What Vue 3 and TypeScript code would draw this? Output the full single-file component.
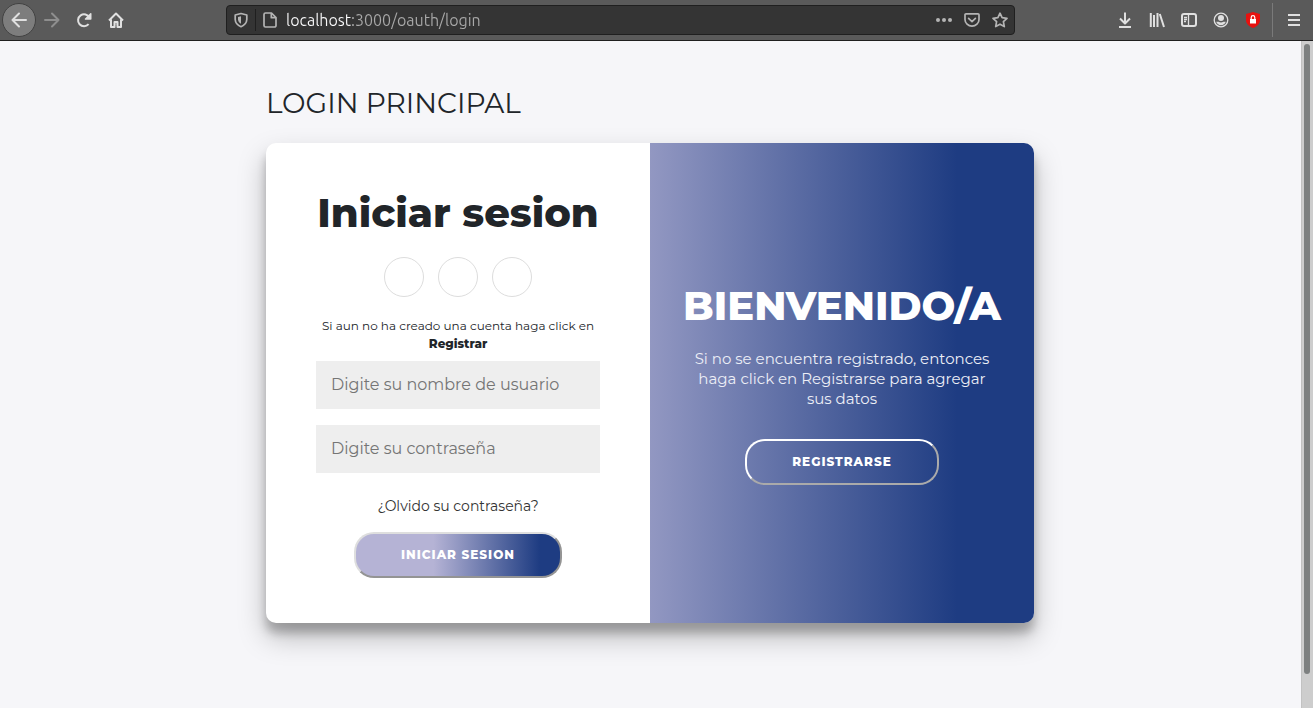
<script setup lang="ts">
import { ref } from 'vue'

const address = ref('localhost:3000/oauth/login')
const user = ref('')
const password = ref('')
const socials: string[] = ['Facebook', 'Google', 'LinkedIn']
</script>

<template>
  <div class="window">
    <header class="toolbar">
      <nav class="group" aria-label="Navegación">
        <button type="button" class="tool back" aria-label="Atrás">
          <svg viewBox="0 0 16 16"><path d="M15 8H1.5M8 1.5L1.5 8L8 14.5" /></svg>
        </button>
        <button type="button" class="tool forward" aria-label="Adelante" disabled>
          <svg viewBox="0 0 16 16"><path d="M1 8h13.500M8 1.500L14.500 8L8 14.500" /></svg>
        </button>
        <button type="button" class="tool" aria-label="Recargar">
          <svg viewBox="0 0 16 16"><path d="M12.600 12.200A6 6 0 1 1 13.400 5.500" /><path class="solid" d="M14.500 1a.8.8 0 0 1 1 .8V7a.8.8 0 0 1-.8.8H9.500a.8.8 0 0 1-.5-1.400l5-5z" /></svg>
        </button>
        <button type="button" class="tool" aria-label="Inicio">
          <svg viewBox="0 0 16 16"><path d="M1 8.500L8 1.500L15 8.500M3 7.500V15H6.500V10H9.500V15H13V7.500" /><path class="solid" d="M7.500 11.500h1v1h-1z" /></svg>
        </button>
      </nav>

      <div class="address">
        <svg class="mini" viewBox="0 0 16 16"><path d="M8 1.500L13.800 3V7.500C13.600 11 11 13.500 8 14.700C5 13.500 2.400 11 2.200 7.500V3Z" /><path class="solid" d="M8 4.200L5 5v2.500C5.100 9.300 6.300 10.800 8 11.800Z" /></svg>
        <span class="split"></span>
        <svg class="mini page-icon" viewBox="0 0 16 16"><path d="M3.500 1H9.500L14 5.500V13.500A1.500 1.500 0 0 1 12.500 15H3.500A1.500 1.500 0 0 1 2 13.500V2.500A1.500 1.500 0 0 1 3.500 1ZM9.300 1.500V5.700H13.700" /></svg>
        <input v-model="address" class="url" type="text" aria-label="Dirección" spellcheck="false" />
        <button type="button" class="mini-button" aria-label="Acciones de página">
          <svg viewBox="0 0 16 16"><circle class="solid" cx="2" cy="8" r="2" /><circle class="solid" cx="8" cy="8" r="2" /><circle class="solid" cx="14" cy="8" r="2" /></svg>
        </button>
        <button type="button" class="mini-button" aria-label="Guardar en Pocket">
          <svg viewBox="0 0 16 16"><path d="M2 1.800H14A1 1 0 0 1 15 2.800V7.500A7 6.700 0 0 1 1 7.500V2.800A1 1 0 0 1 2 1.800Z" /><path d="M4.600 6.300L8 9.600L11.400 6.300" stroke-linecap="round" /></svg>
        </button>
        <button type="button" class="mini-button" aria-label="Marcar página">
          <svg viewBox="0 0 16 16"><path d="M8 1.200L10.100 5.700L15 6.300L11.400 9.700L12.300 14.600L8 12.200L3.700 14.600L4.600 9.700L1 6.300L5.900 5.700Z" /></svg>
        </button>
      </div>

      <div class="group">
        <button type="button" class="tool" aria-label="Descargas">
          <svg viewBox="0 0 16 16"><path d="M8 0.500V11M3 6.500L8 11.500L13 6.500M2 15H14" /></svg>
        </button>
        <button type="button" class="tool" aria-label="Biblioteca">
          <svg viewBox="0 0 16 16"><path d="M1.800 1V15M5 3V15M8.500 1V15M10.800 2L15 15" /></svg>
        </button>
        <button type="button" class="tool" aria-label="Barra lateral">
          <svg viewBox="0 0 16 16"><rect x="1" y="2" width="14" height="12" rx="2" /><path class="thin" d="M7.500 2V14M3 5.500H6M3 7.500H6M3 9.500H5" /></svg>
        </button>
        <button type="button" class="tool" aria-label="Cuenta">
          <svg viewBox="0 0 16 16"><circle class="thin" cx="8" cy="8" r="6.800" /><circle class="solid" cx="8" cy="6" r="3" /><path class="solid" d="M3.200 9.700H5.600C7 10.700 9 10.700 10.400 9.700H12.800C12 12 10.200 13.200 8 13.200S4 12 3.200 9.700Z" /></svg>
        </button>
        <button type="button" class="tool" aria-label="Bloqueador">
          <svg viewBox="0 0 16 16"><path class="red" d="M8 0L15 2V8C15 12 11.500 14.800 8 16C4.500 14.800 1 12 1 8V2Z" /><path class="white" d="M5 7h6v4.500H5z" /><path class="arch" d="M6.200 7V5.500a1.800 1.800 0 0 1 3.600 0V7" /></svg>
        </button>
        <span class="divider"></span>
        <button type="button" class="tool" aria-label="Menú">
          <svg viewBox="0 0 16 16"><path d="M2 3H14M2 8H14M2 13H14" /></svg>
        </button>
      </div>
    </header>

    <div class="viewport">
      <main class="page">
        <div class="content">
          <h1 class="page-title">LOGIN PRINCIPAL</h1>
          <div class="card">
            <form class="panel sign-in" @submit.prevent>
              <h2>Iniciar sesion</h2>
              <div class="socials">
                <a v-for="name in socials" :key="name" href="#" :aria-label="name"></a>
              </div>
              <p class="hint">Si aun no ha creado una cuenta haga click en <strong>Registrar</strong></p>
              <input v-model="user" type="text" aria-label="Nombre de usuario" placeholder="Digite su nombre de usuario" />
              <input v-model="password" type="password" aria-label="Contraseña" placeholder="Digite su contraseña" />
              <a class="forgot" href="#">¿Olvido su contraseña?</a>
              <button type="submit" class="pill filled">INICIAR SESION</button>
            </form>
            <section class="panel welcome">
              <h2>BIENVENIDO/A</h2>
              <p>Si no se encuentra registrado, entonces haga click en Registrarse para agregar sus datos</p>
              <button type="button" class="pill ghost">REGISTRARSE</button>
            </section>
          </div>
        </div>
      </main>
      <div class="scrollbar"><div class="thumb"></div></div>
    </div>
  </div>
</template>

<style>
body {
  margin: 0;
  background: #f6f6f9;
}
</style>

<style scoped>
* {
  box-sizing: border-box;
}
.window {
  display: flex;
  flex-direction: column;
  min-height: 100vh;
  font-family: Montserrat, Inter, "Open Sans", sans-serif;
  color: #212529;
}
button,
input {
  font-family: inherit;
}
.toolbar {
  display: flex;
  align-items: center;
  justify-content: space-between;
  height: 41px;
  padding: 0 3px 0 2px;
  background: #5a5a5a;
  border-bottom: 1px solid #1f1f1f;
}
.group {
  display: flex;
  align-items: center;
}
.tool,
.mini-button {
  display: flex;
  align-items: center;
  justify-content: center;
  width: 32px;
  height: 32px;
  padding: 0;
  border: 0;
  background: none;
  color: #e0e0e0;
}
.mini-button {
  width: 28px;
  height: 28px;
  color: #b4b4b4;
}
.back {
  width: 34px;
  height: 34px;
  border: 1px solid #424242;
  border-radius: 50%;
  background: #7d7d7d;
}
.forward {
  color: #8e8e8e;
}
svg {
  flex: none;
  width: 16px;
  height: 16px;
  fill: none;
  stroke: currentColor;
  stroke-width: 2;
  stroke-linejoin: round;
}
.back svg,
.forward svg {
  stroke-linecap: round;
}
.mini,
.mini-button svg {
  stroke-width: 1.7;
}
.solid {
  fill: currentColor;
  stroke: none;
}
.thin {
  stroke-width: 1.3;
}
.red {
  fill: #e8110f;
  stroke: none;
}
.white {
  fill: #fff;
  stroke: none;
}
.arch {
  stroke: #fff;
  stroke-width: 1.2;
}
.address {
  display: flex;
  align-items: center;
  flex: 0 1 789px;
  min-width: 0;
  height: 30px;
  padding: 0 0 0 6px;
  border: 1px solid #1f1f1f;
  border-radius: 4px;
  background: #343434;
  color: #b4b4b4;
}
.split {
  width: 1px;
  height: 22px;
  margin: 0 6px;
  background: #1f1f1f;
}
.page-icon {
  margin-right: 8px;
}
.url {
  flex: 1;
  min-width: 0;
  height: 28px;
  padding: 0;
  border: 0;
  outline: 0;
  font-family: Ubuntu, "Noto Sans", sans-serif;
  font-size: 16px;
  background: linear-gradient(90deg, #f9f9fa 65px, #a9a9a9 65px);
  -webkit-background-clip: text;
  background-clip: text;
  color: transparent;
}
.divider {
  width: 1px;
  height: 34px;
  margin: 0 5px 0 3px;
  background: #7a7a7a;
}
.viewport {
  display: flex;
  flex: 1;
}
.page {
  flex: 1;
  min-width: 0;
  padding: 44px 17px 44px 16px;
}
.content {
  max-width: 768px;
  margin: 0 auto;
}
.page-title {
  margin: 0 0 22px;
  font-size: 28px;
  line-height: 36px;
  font-weight: 400;
}
.card {
  display: flex;
  min-height: 480px;
  overflow: hidden;
  border-radius: 10px;
  background: #fff;
  box-shadow: 0 14px 28px rgba(0, 0, 0, 0.25), 0 10px 10px rgba(0, 0, 0, 0.22);
}
.panel {
  display: flex;
  flex: none;
  width: 50%;
  flex-direction: column;
  align-items: center;
  justify-content: center;
  min-width: 0;
  text-align: center;
}
.sign-in {
  padding: 0 50px;
}
h2 {
  margin: 0;
  font-size: 40px;
  line-height: 48px;
  font-weight: 800;
  white-space: nowrap;
}
.socials {
  display: flex;
  gap: 14px;
  margin: 20px 0;
}
.socials a {
  width: 40px;
  height: 40px;
  border: 1px solid #ddd;
  border-radius: 50%;
}
.hint {
  margin: 0;
  font-size: 12px;
  line-height: 18px;
}
.hint strong {
  display: block;
  font-weight: 800;
}
.sign-in input {
  width: 100%;
  height: 48px;
  margin: 8px 0;
  padding: 0 15px;
  border: 0;
  border-radius: 0;
  background: #eee;
  font-size: 16px;
  font-weight: 400;
}
.sign-in input::placeholder {
  color: #757575;
}
.forgot {
  margin: 15px 0 16px;
  color: #333;
  font-size: 14px;
  line-height: 20px;
  text-decoration: none;
}
.pill {
  height: 46px;
  padding: 0 45px;
  border-radius: 20px;
  color: #fff;
  font-size: 12px;
  font-weight: 800;
  letter-spacing: 1px;
  white-space: nowrap;
}
.filled {
  border: 2px solid;
  border-color: #dedede #949494 #949494 #dedede;
  background: linear-gradient(to right, #b5b3d5 38%, #1e3c82 90%);
}
.ghost {
  border: 2px solid;
  border-color: #fff #aaa #aaa #fff;
  background: transparent;
}
.welcome {
  padding: 0 32px;
  color: #fff;
  background: linear-gradient(to right, #b5b3d5 38%, #1e3c82 90%) right / 200% 100%;
}
.welcome p {
  max-width: 310px;
  margin: 19px 0 30px;
  color: #eceef6;
  font-size: 15px;
  line-height: 20px;
  font-weight: 400;
}
.scrollbar {
  width: 12px;
  padding: 3px 3px 34px 2px;
  border-left: 1px solid #c2c2c2;
  background: #cdcdcd;
  display: flex;
}
.thumb {
  width: 6px;
  border-radius: 3px;
  background: #7d8080;
}
</style>
